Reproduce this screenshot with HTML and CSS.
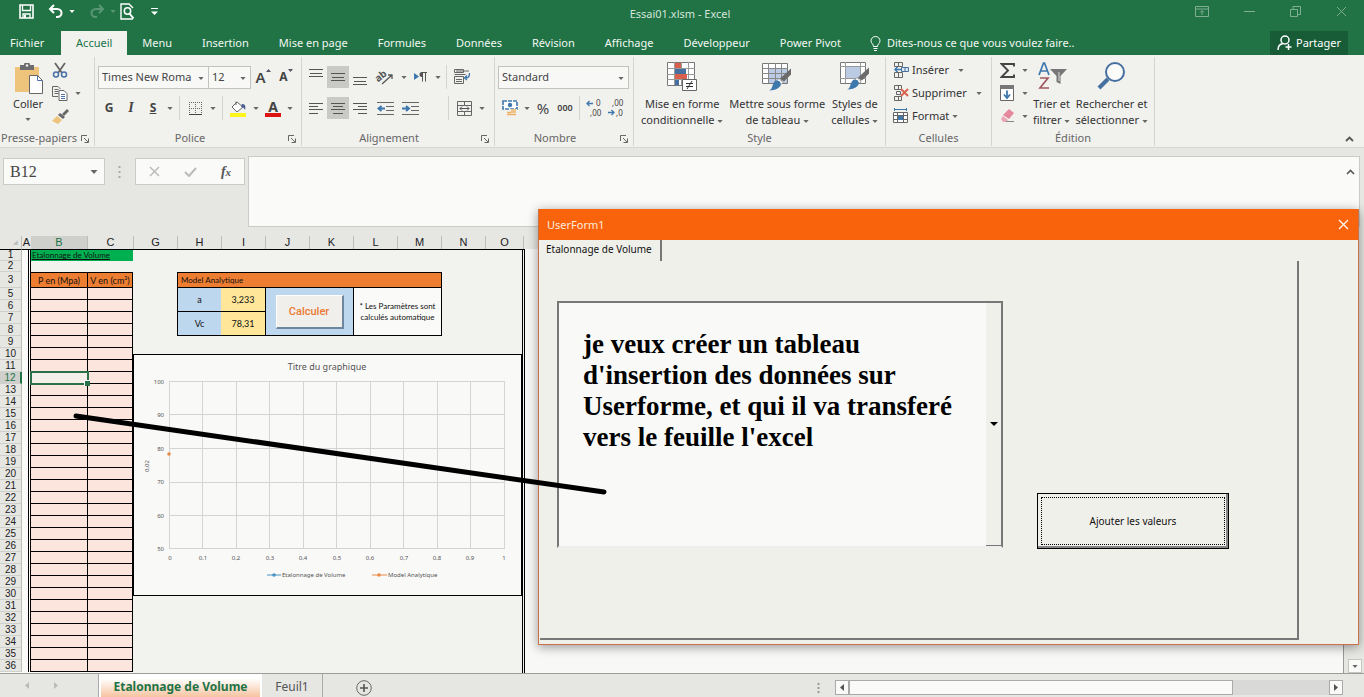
FILE: index.html
```html
<!DOCTYPE html>
<html lang="fr">
<head>
<meta charset="utf-8">
<title>Essai01.xlsm - Excel</title>
<link rel="stylesheet" href="styles.css">
</head>
<body>
<svg class="defs" aria-hidden="true">
  <symbol id="caret" viewBox="0 0 7 4"><path d="M0 0h7L3.500 4z" fill="currentColor"/></symbol>
  <symbol id="launch" viewBox="0 0 8 8"><path d="M.5 6V.5H6M3 3l4 4M7.500 3.500v4h-4" fill="none" stroke="#666"/></symbol>
  <symbol id="brush" viewBox="0 0 22 22"><path d="M22 0v6l-7 7-4-3z" fill="#6b6b6b"/><path d="M10 10l4 4-2 2-4-4z" fill="#fff" stroke="#777" stroke-width=".6"/><path d="M8 12c3 0 5 3 3 6-3 3-7 4-11 4 3-1 3-4 4-6 1-3 2-4 4-4z" fill="#3f78ad"/></symbol>
</svg>

<header class="top">
  <div class="titlebar">
    <div class="quick">
      <button class="tb" aria-label="Enregistrer"><svg width="15" height="15" viewBox="0 0 15 15"><path d="M1 1h13v13H1z" fill="none" stroke="#fff" stroke-width="1.600"/><path d="M3.500 1v5.500h8V1M4 14v-4h7v4" fill="none" stroke="#fff" stroke-width="1.300"/><path d="M5 11h2v3H5z" fill="#fff"/></svg></button>
      <button class="tb" aria-label="Annuler"><svg width="16" height="15" viewBox="0 0 16 15"><path d="M6 1L2 5l4 4M2 5h7c6 0 6 8 0 8H8" fill="none" stroke="#fff" stroke-width="2"/></svg><svg class="caret" ><use href="#caret"/></svg></button>
      <button class="tb faded" aria-label="Rétablir"><svg width="16" height="15" viewBox="0 0 16 15"><path d="M10 1l4 4-4 4M14 5H7c-6 0-6 8 0 8h1" fill="none" stroke="#fff" stroke-width="2"/></svg><svg class="caret"><use href="#caret"/></svg></button>
      <button class="tb preview" aria-label="Aperçu"><svg width="15" height="17" viewBox="0 0 15 17"><path d="M13 16H1V1h8l4 4" fill="none" stroke="#fff" stroke-width="1.400"/><circle cx="7.500" cy="8" r="3.200" fill="none" stroke="#fff" stroke-width="1.500"/><path d="M9.500 10.500l4 5" stroke="#fff" stroke-width="2"/></svg></button>
      <button class="tb" aria-label="Personnaliser"><svg width="7" height="8" viewBox="0 0 7 8"><path d="M0 .5h7" stroke="#fff"/><path d="M0 3.500h7L3.500 7z" fill="#fff"/></svg></button>
    </div>
    <div class="doc">Essai01.xlsm - Excel</div>
    <div class="wins">
      <button class="wb" aria-label="Options du ruban"><svg width="14" height="11"><path d="M.5.5h13v10H.5zM.5 3h13M7 9V5M5 6.500L7 4.500l2 2" fill="none" stroke="currentColor"/></svg></button>
      <button class="wb" aria-label="Réduire"><svg width="11" height="11"><path d="M0 5.500h11" stroke="currentColor"/></svg></button>
      <button class="wb" aria-label="Restaurer"><svg width="11" height="11"><path d="M.5 3.500h7v7h-7zM3 3V.5h7.500v8H8" fill="none" stroke="currentColor"/></svg></button>
      <button class="wb" aria-label="Fermer"><svg width="11" height="11"><path d="M1 1l9 9M10 1l-9 9" stroke="currentColor"/></svg></button>
    </div>
  </div>
  <nav class="tabs">
    <button class="tab file">Fichier</button><button class="tab on">Accueil</button><button class="tab">Menu</button><button class="tab">Insertion</button><button class="tab">Mise en page</button><button class="tab">Formules</button><button class="tab">Données</button><button class="tab">Révision</button><button class="tab">Affichage</button><button class="tab">Développeur</button><button class="tab">Power Pivot</button>
    <button class="tab tell"><svg width="11" height="15" viewBox="0 0 11 15"><path d="M3.500 10.500C3.500 8 1 7.500 1 4.800a4.500 4.300 0 0 1 9 0C10 7.500 7.500 8 7.500 10.500zM3.500 12.500h4M4 14.500h3" fill="none" stroke="#fff"/></svg>Dites-nous ce que vous voulez faire..</button>
    <button class="share"><svg width="15" height="16" viewBox="0 0 15 16"><circle cx="8" cy="5" r="4" fill="none" stroke="#fff" stroke-width="1.500"/><path d="M1 15c0-4 2-6 5-6.500M11.500 9v6M8.500 12h6" fill="none" stroke="#fff" stroke-width="1.500"/></svg>Partager</button>
  </nav>
</header>

<section class="ribbon">
  <div class="group g-clip">
    <div class="body">
      <button class="big paste"><svg width="29" height="31" viewBox="0 0 29 31"><path d="M1 4h24v25H1z" fill="#eec37c"/><path d="M6 2h4a3 3 0 0 1 6 0h4v5H6z" fill="#6d6d70"/><circle cx="13" cy="2.500" r="1.200" fill="#f1f1ee"/><path d="M15.500 12.500h8l5 5v13h-13z" fill="#fff" stroke="#666"/><path d="M23.500 12.500v5h5" fill="none" stroke="#4a72a8"/></svg><span>Coller</span><svg class="caret"><use href="#caret"/></svg></button>
      <div class="stack">
        <button class="ib" aria-label="Couper"><svg width="16" height="16" viewBox="0 0 16 16"><path d="M3 1l7 10M13 1L6 11" stroke="#666" stroke-width="1.800"/><circle cx="4" cy="12.500" r="2.500" fill="none" stroke="#4a72a8" stroke-width="1.500"/><circle cx="12" cy="12.500" r="2.500" fill="none" stroke="#4a72a8" stroke-width="1.500"/></svg></button>
        <button class="ib" aria-label="Copier"><svg width="16" height="15" viewBox="0 0 16 15"><path d="M6 10.500H.5V.5H6l2.500 2.500M2.500 3.500h4M2.500 5.500h4M2.500 7.500h4" fill="none" stroke="#666"/><path d="M7 4.500h5l3 3v7H7z" fill="#fff" stroke="#666"/><path d="M9 8.500h4M9 10.500h4M9 12.500h4" stroke="#4a72a8"/></svg><svg class="caret"><use href="#caret"/></svg></button>
        <button class="ib" aria-label="Reproduire la mise en forme"><svg width="17" height="15" viewBox="0 0 17 15"><path d="M15 0l2 2-5 5-2-2z" fill="#666"/><path d="M8 4l5 4-2 2-5-4z" fill="#666"/><path d="M5 7l5 4-4 4-6-3z" fill="#eec37c"/></svg></button>
      </div>
    </div>
    <div class="name">Presse-papiers<svg class="launch"><use href="#launch"/></svg></div>
  </div>

  <div class="group g-font">
    <div class="body rows">
      <div class="row">
        <label class="combo face"><select aria-label="Police"><option>Times New Roma</option></select><svg class="caret"><use href="#caret"/></svg></label><label class="combo size"><select aria-label="Taille"><option>12</option></select><svg class="caret"><use href="#caret"/></svg></label>
        <button class="c24 grow" aria-label="Agrandir"><b class="t15">A</b><svg width="5" height="3" viewBox="0 0 5 3"><path d="M0 3h5L2.500 0z" fill="#556"/></svg></button>
        <button class="c22 grow" aria-label="Réduire la police"><b class="t12">A</b><svg width="5" height="3" viewBox="0 0 5 3"><path d="M0 0h5L2.500 3z" fill="#556"/></svg></button>
      </div>
      <div class="row">
        <button class="c22 t12"><b>G</b></button><button class="c22"><b><i class="ser">I</i></b></button><button class="c22 t12"><b><u>S</u></b></button><button class="c12" aria-label="Souligné"><svg class="caret"><use href="#caret"/></svg></button><span class="sep"></span>
        <button class="c24" aria-label="Bordures"><svg width="13" height="13"><path d="M.5 0v13M12.500 0v13M0 .5h13M6.500 0v13M0 6.500h13" stroke="#666" stroke-dasharray="1 1"/><path d="M0 12.500h13" stroke="#444"/></svg></button><button class="c12" aria-label="Choix de bordure"><svg class="caret"><use href="#caret"/></svg></button><span class="sep"></span>
        <button class="c24" aria-label="Remplissage"><svg width="17" height="17" viewBox="0 0 17 17"><path d="M7 2l6 5-6 5-5-5zM6 5V1.500" fill="#fff" stroke="#666"/><path d="M12 4c3 0 4 2 3 6-1-2-2-3-4-3z" fill="#4a5f95"/><path d="M0 13h16v4H0z" fill="#fdf51b"/></svg></button><button class="c12" aria-label="Couleur de remplissage"><svg class="caret"><use href="#caret"/></svg></button>
        <button class="c22 fc" aria-label="Couleur de police"><b class="t14">A</b></button><button class="c12" aria-label="Choix de couleur"><svg class="caret"><use href="#caret"/></svg></button>
      </div>
    </div>
    <div class="name">Police<svg class="launch"><use href="#launch"/></svg></div>
  </div>

  <div class="group g-align">
    <div class="body rows">
      <div class="row">
        <button class="c22 up" aria-label="Haut"><svg width="14" height="10"><path d="M0 1.500h14M1 5.500h12M0 8.500h14" stroke="#555"/></svg></button><button class="c22 hi" aria-label="Milieu"><svg width="14" height="10"><path d="M0 1.500h14M1 5.500h12M0 8.500h14" stroke="#555"/></svg></button><button class="c22 down" aria-label="Bas"><svg width="14" height="10"><path d="M0 1.500h14M1 5.500h12M0 8.500h14" stroke="#555"/></svg></button>
        <button class="c28" aria-label="Orientation"><svg class="open" width="18" height="16" viewBox="0 0 18 16"><text x="0" y="10" font-size="10" font-weight="bold" fill="#555" transform="rotate(-38 6 9)">ab</text><path d="M6 15L16 6M12 6h4v4" fill="none" stroke="#555" stroke-width="1.300"/></svg></button><button class="cc" aria-label="Choix d'orientation"><svg class="caret"><use href="#caret"/></svg></button>
        <button class="c24" aria-label="Sens du texte"><svg width="14" height="12" viewBox="0 0 14 12"><path d="M0 2l5 3.500L0 9z" fill="#3f78ad"/><path d="M8.500 1.500v9M11.500 1.500v9M7 1.500h6" stroke="#555"/><path d="M9 1H8a2.500 2.500 0 0 0 0 5h1z" fill="#555"/></svg></button><button class="cc" aria-label="Choix du sens"><svg class="caret"><use href="#caret"/></svg></button><span class="sep"></span>
        <button class="c24" aria-label="Renvoyer à la ligne"><svg width="17" height="16" viewBox="0 0 17 16"><path d="M.5.5h9v3h-9zM.5 5.500h11M.5 7.500v7h9v-7zM2 10.500h6M2 12.500h6M2 2h13" fill="none" stroke="#666"/><path d="M15.500 4c0 4-1 5-5 5M13 6.500L10.500 9l2.500 2" fill="none" stroke="#3f78ad" stroke-width="1.300"/></svg></button>
      </div>
      <div class="row">
        <button class="c22" aria-label="Gauche"><svg width="14" height="13"><path d="M0 1.500h14M0 4.500h9M0 7.500h14M0 11.500h9" stroke="#555"/></svg></button><button class="c22 hi" aria-label="Centrer"><svg width="14" height="13"><path d="M0 1.500h14M2 4.500h10M0 7.500h14M2 11.500h10" stroke="#555"/></svg></button><button class="c22" aria-label="Droite"><svg width="14" height="13"><path d="M0 1.500h14M5 4.500h9M0 7.500h14M5 11.500h9" stroke="#555"/></svg></button>
        <button class="c28" aria-label="Diminuer le retrait"><svg width="17" height="13"><path d="M0 .5h17M9 4.500h8M9 8.500h8M0 12.500h17" stroke="#666"/><path d="M8 6.500H2M4.500 4L1.500 6.500l3 2.500" fill="none" stroke="#3f78ad" stroke-width="2"/></svg></button><button class="c22" aria-label="Augmenter le retrait"><svg width="17" height="13"><path d="M0 .5h17M9 4.500h8M9 8.500h8M0 12.500h17" stroke="#666"/><path d="M0 6.500h6M4 4l3 2.500L4 9" fill="none" stroke="#3f78ad" stroke-width="2"/></svg></button><span class="gap"></span><span class="sep"></span>
        <button class="c24" aria-label="Fusionner"><svg width="15" height="15"><path d="M.5.5h14v14H.5zM.5 4.500h14M.5 10.500h14M7.500 0v4M7.500 11v4" fill="none" stroke="#666"/><path d="M3 7.500h9M5 5.500l-2 2 2 2M10 5.500l2 2-2 2" fill="none" stroke="#555"/></svg></button><button class="c12" aria-label="Choix de fusion"><svg class="caret"><use href="#caret"/></svg></button>
      </div>
    </div>
    <div class="name">Alignement<svg class="launch"><use href="#launch"/></svg></div>
  </div>

  <div class="group g-num">
    <div class="body rows">
      <div class="row"><label class="combo fmt"><select aria-label="Format de nombre"><option>Standard</option></select><svg class="caret"><use href="#caret"/></svg></label></div>
      <div class="row">
        <button class="c24" aria-label="Comptabilité"><svg width="17" height="16" viewBox="0 0 17 16"><path d="M1 1h14v8H1z" fill="#fff" stroke="#3f78ad" stroke-width="1.600" stroke-dasharray="4 1"/><circle cx="8" cy="5" r="2.200" fill="#3f78ad"/><path d="M8 9h7v6H5v-4h3z" fill="#f1f1ee"/><path d="M9 10h5M9 12h5M5 12.500h4M5 14.500h9" stroke="#eeb266" stroke-width="1.500"/></svg></button><button class="cc" aria-label="Choix de devise"><svg class="caret"><use href="#caret"/></svg></button>
        <button class="c22 pct">%</button><button class="c22 mil">000</button><span class="sep"></span>
        <button class="c22" aria-label="Ajouter une décimale"><svg class="open" width="16" height="18" viewBox="0 0 16 18"><path d="M7 4.500H1M3.500 2L1 4.500 3.500 7" fill="none" stroke="#3f78ad" stroke-width="1.300"/><text x="10" y="7" font-size="8" fill="#444">0</text><text x="4" y="17" font-size="8" fill="#444">,00</text></svg></button><button class="c22" aria-label="Réduire les décimales"><svg class="open" width="16" height="18" viewBox="0 0 16 18"><text x="4" y="7" font-size="8" fill="#444">,00</text><path d="M0 13.500h6M3.500 11L6 13.500 3.500 16" fill="none" stroke="#3f78ad" stroke-width="1.300"/><text x="8" y="17" font-size="8" fill="#444">,0</text></svg></button>
      </div>
    </div>
    <div class="name">Nombre<svg class="launch"><use href="#launch"/></svg></div>
  </div>

  <div class="group g-style">
    <div class="body bigs">
      <button class="big"><svg width="30" height="31" viewBox="0 0 30 31"><path d="M.5 1.500h27v23H.5z" fill="#fff" stroke="#777"/><path d="M7.500 1v23M14.500 1v23M21.500 1v23M0 7.500h28M0 13.500h28M0 18.500h28" stroke="#999"/><path d="M8 2h6v5H8zM8 13h12v5H8z" fill="#d9604c"/><path d="M8 8h11v5H8zM8 19h4v5H8z" fill="#46709f"/><path d="M15.500 18.500h14v11h-14z" fill="#fff" stroke="#666"/><path d="M19 22.500h7M19 25.500h7M25 20l-5 8" stroke="#333"/></svg><span>Mise en forme<br>conditionnelle <svg class="caret"><use href="#caret"/></svg></span></button>
      <button class="big"><svg width="30" height="31" viewBox="0 0 30 31"><path d="M.5 2.500h25v20H.5z" fill="#fff" stroke="#777"/><path d="M7 8h18v14H7z" fill="#bccbe4"/><path d="M6.500 2v20M13.500 2v20M19.500 2v20M0 7.500h26M0 12.500h26M0 17.500h26" stroke="#888"/><use href="#brush" x="7" y="7" width="22" height="23"/></svg><span>Mettre sous forme<br>de tableau <svg class="caret"><use href="#caret"/></svg></span></button>
      <button class="big"><svg width="30" height="31" viewBox="0 0 30 31"><path d="M.5 1.500h25v21H.5z" fill="#fff" stroke="#777"/><path d="M5.500 1v21M20.500 1v21M0 5.500h26M0 17.500h26" stroke="#999"/><path d="M6 6h14v11H6z" fill="#bccbe4"/><use href="#brush" x="7" y="6" width="22" height="23"/></svg><span>Styles de<br>cellules <svg class="caret"><use href="#caret"/></svg></span></button>
    </div>
    <div class="name">Style</div>
  </div>

  <div class="group g-cells">
    <div class="body lines">
      <button class="line"><svg width="16" height="16" viewBox="0 0 16 16"><path d="M1.500.5h8v4h-8zM5.500 0v4M1.500 10.500h8v5h-8zM5.500 10v5" fill="none" stroke="#666"/><path d="M8.500 5.500h7v4h-7zM12 5v4" fill="#dce6f2" stroke="#46709f"/><path d="M8 7.500H2M4.500 5L2 7.500 4.500 10" fill="none" stroke="#3f78ad" stroke-width="1.500"/></svg>Insérer <svg class="caret far"><use href="#caret"/></svg></button>
      <button class="line"><svg width="16" height="16" viewBox="0 0 16 16"><path d="M1.500.5h7v4h-7zM5.500 0v4M3.500 6.500h4v3h-4zM1.500 11.500h7v4h-7zM5.500 11v4" fill="none" stroke="#666"/><path d="M8 4l7 7M15 4l-7 7" stroke="#d9604c" stroke-width="1.800"/></svg>Supprimer <svg class="caret far"><use href="#caret"/></svg></button>
      <button class="line"><svg width="16" height="16" viewBox="0 0 16 16"><path d="M1 1.500h13M1.500 0v3M13.500 0v3" stroke="#3f78ad"/><path d="M.5 4.500h14v10H.5zM.5 7.500h14M.5 11.500h14M4.500 4v11M10.500 4v11" fill="#fff" stroke="#666"/><path d="M5 8h5v4H5z" fill="#3f78ad"/></svg>Format <svg class="caret"><use href="#caret"/></svg></button>
    </div>
    <div class="name">Cellules</div>
  </div>

  <div class="group g-edit">
    <div class="body">
      <div class="stack wide">
        <button class="ib" aria-label="Somme"><svg width="15" height="15" viewBox="0 0 15 15"><path d="M14 3.500V1H1.500L8 7.500 1.500 14H14v-2.500" fill="none" stroke="#444" stroke-width="1.900"/></svg><svg class="caret"><use href="#caret"/></svg></button>
        <button class="ib" aria-label="Remplir"><svg width="15" height="16" viewBox="0 0 15 16"><path d="M.5.5h13v15H.5z" fill="#fff" stroke="#666"/><path d="M0 0h14v4H0z" fill="#777"/><path d="M7 5.500v7M4 9.500l3 3.500 3-3.500" fill="none" stroke="#3f78ad" stroke-width="1.800"/></svg><svg class="caret"><use href="#caret"/></svg></button>
        <button class="ib" aria-label="Effacer"><svg width="15" height="14" viewBox="0 0 15 14"><path d="M9 0l5 4-5 6-6-4z" fill="#e5879d"/><path d="M3 7l5 4-2 2H3L1 10z" fill="#e9a6b5"/><path d="M6 12.500h8" stroke="#888"/></svg><svg class="caret"><use href="#caret"/></svg></button>
      </div>
      <div class="bigs">
        <button class="big"><svg width="30" height="31" viewBox="0 0 30 31"><path d="M2 14L6.500 2h1L12 14M4 10h6" fill="none" stroke="#3f78ad" stroke-width="1.700"/><path d="M3 17h8L3 27h9" fill="none" stroke="#a15a62" stroke-width="1.700"/><path d="M13 8h17l-6.500 7v8l-4-2v-6z" fill="#777"/><path d="M22 11v9" stroke="#ddd"/></svg><span>Trier et<br>filtrer <svg class="caret"><use href="#caret"/></svg></span></button>
        <button class="big"><svg width="30" height="31" viewBox="0 0 30 31"><circle cx="18" cy="11" r="9" fill="#fbfbf9" stroke="#46709f" stroke-width="2"/><path d="M11 18L2 27" stroke="#46709f" stroke-width="4"/></svg><span>Rechercher et<br>sélectionner <svg class="caret"><use href="#caret"/></svg></span></button>
      </div>
    </div>
    <div class="name">Édition</div>
  </div>
  <button class="fold" aria-label="Réduire le ruban"><svg width="9" height="6"><path d="M1 5l3.500-3.500L8 5" fill="none" stroke="#555" stroke-width="1.800"/></svg></button>
</section>

<section class="fbar">
  <label class="namebox"><input value="B12" aria-label="Zone Nom"><svg class="caret"><use href="#caret"/></svg></label>
  <svg class="dots" width="3" height="12"><path d="M1.500 0v2M1.500 5v2M1.500 10v2" stroke="#aaa" stroke-width="2"/></svg>
  <div class="fbtns"><button aria-label="Annuler la saisie"><svg width="11" height="11"><path d="M1 1l9 9M10 1l-9 9" stroke="#bbb" stroke-width="1.500"/></svg></button><button aria-label="Entrer"><svg width="13" height="10"><path d="M1 5l4 4 7-8" fill="none" stroke="#bbb" stroke-width="2"/></svg></button><button class="fx"><i>f</i><small>x</small></button></div>
  <textarea class="formula" aria-label="Barre de formule"></textarea>
  <button class="fdown" aria-label="Réduire la barre"><svg width="9" height="6"><path d="M1 5l3.500-3.500L8 5" fill="none" stroke="#555" stroke-width="1.600"/></svg></button>
</section>

<main class="work">
  <div class="cols"><span class="k0">◢</span><span class="k1">A</span><span class="k2 sel">B</span><span class="k3">C</span><span>G</span><span>H</span><span>I</span><span>J</span><span>K</span><span>L</span><span>M</span><span>N</span><span class="k4">O</span></div>
  <div class="sheet">
    <table class="data">
      <colgroup><col class="c-num"><col class="c-a"><col class="c-b"><col class="c-c"></colgroup>
      <tr class="r1"><th>1</th><td class="a"></td><td class="ttl" colspan="2">Etalonnage de Volume</td></tr>
      <tr class="r2"><th>2</th><td class="a"></td><td colspan="2"></td></tr>
      <tr class="r3"><th>3</th><td class="a"></td><td class="h">P en (Mpa)</td><td class="h">V en (cm³)</td></tr>
      <tr><th>5</th><td class="a"></td><td class="p"></td><td class="p"></td></tr>
      <tr><th>6</th><td class="a"></td><td class="p"></td><td class="p"></td></tr>
      <tr><th>7</th><td class="a"></td><td class="p"></td><td class="p"></td></tr>
      <tr><th>8</th><td class="a"></td><td class="p"></td><td class="p"></td></tr>
      <tr><th>9</th><td class="a"></td><td class="p"></td><td class="p"></td></tr>
      <tr><th>10</th><td class="a"></td><td class="p"></td><td class="p"></td></tr>
      <tr><th>11</th><td class="a"></td><td class="p"></td><td class="p"></td></tr>
      <tr><th class="sel">12</th><td class="a"></td><td class="p cur"></td><td class="p"></td></tr>
      <tr><th>13</th><td class="a"></td><td class="p"></td><td class="p"></td></tr>
      <tr><th>14</th><td class="a"></td><td class="p"></td><td class="p"></td></tr>
      <tr><th>15</th><td class="a"></td><td class="p"></td><td class="p"></td></tr>
      <tr><th>16</th><td class="a"></td><td class="p"></td><td class="p"></td></tr>
      <tr><th>17</th><td class="a"></td><td class="p"></td><td class="p"></td></tr>
      <tr><th>18</th><td class="a"></td><td class="p"></td><td class="p"></td></tr>
      <tr><th>19</th><td class="a"></td><td class="p"></td><td class="p"></td></tr>
      <tr><th>20</th><td class="a"></td><td class="p"></td><td class="p"></td></tr>
      <tr><th>21</th><td class="a"></td><td class="p"></td><td class="p"></td></tr>
      <tr><th>22</th><td class="a"></td><td class="p"></td><td class="p"></td></tr>
      <tr><th>23</th><td class="a"></td><td class="p"></td><td class="p"></td></tr>
      <tr><th>24</th><td class="a"></td><td class="p"></td><td class="p"></td></tr>
      <tr><th>25</th><td class="a"></td><td class="p"></td><td class="p"></td></tr>
      <tr><th>26</th><td class="a"></td><td class="p"></td><td class="p"></td></tr>
      <tr><th>27</th><td class="a"></td><td class="p"></td><td class="p"></td></tr>
      <tr><th>28</th><td class="a"></td><td class="p"></td><td class="p"></td></tr>
      <tr><th>29</th><td class="a"></td><td class="p"></td><td class="p"></td></tr>
      <tr><th>30</th><td class="a"></td><td class="p"></td><td class="p"></td></tr>
      <tr><th>31</th><td class="a"></td><td class="p"></td><td class="p"></td></tr>
      <tr><th>32</th><td class="a"></td><td class="p"></td><td class="p"></td></tr>
      <tr><th>33</th><td class="a"></td><td class="p"></td><td class="p"></td></tr>
      <tr><th>34</th><td class="a"></td><td class="p"></td><td class="p"></td></tr>
      <tr><th>35</th><td class="a"></td><td class="p"></td><td class="p"></td></tr>
      <tr><th>36</th><td class="a"></td><td class="p"></td><td class="p"></td></tr>
    </table>
    <div class="panel">
      <table class="model">
        <colgroup><col class="m-b"><col class="m-y"><col class="m-l"><col class="m-l"></colgroup>
        <tr><th colspan="4">Model Analytique</th></tr>
        <tr><td class="b v">a</td><td class="y v">3,233</td><td class="b l" rowspan="2"><button class="calc">Calculer</button></td><td class="w l" rowspan="2">* Les Paramètres sont calculés automatique</td></tr>
        <tr><td class="b">Vc</td><td class="y">78,31</td></tr>
      </table>
      <svg class="chart" viewBox="0 0 387 240" role="img" aria-label="Titre du graphique">
        <path d="M35.500 26.500h335M35.500 59.500h335M35.500 93.500h335M35.500 127.500h335M35.500 160.500h335M35.500 193.500h335M35.500 26v168M68.500 26v168M102.500 26v168M135.500 26v168M169.500 26v168M202.500 26v168M236.500 26v168M269.500 26v168M303.500 26v168M336.500 26v168M370.500 26v168" stroke="#d4d4d2" fill="none"/>
        <text class="ct" x="193" y="15">Titre du graphique</text>
        <g class="ax end"><text x="30" y="29">100</text><text x="30" y="62">90</text><text x="30" y="96">80</text><text x="30" y="129">70</text><text x="30" y="163">60</text><text x="30" y="196">50</text></g>
        <g class="ax mid"><text x="36" y="205">0</text><text x="69" y="205">0,1</text><text x="102" y="205">0,2</text><text x="136" y="205">0,3</text><text x="169" y="205">0,4</text><text x="203" y="205">0,5</text><text x="236" y="205">0,6</text><text x="270" y="205">0,7</text><text x="303" y="205">0,8</text><text x="336" y="205">0,9</text><text x="370" y="205">1</text><text transform="rotate(-90 15 111)" x="15" y="111">0,02</text></g>
        <path d="M133 220h14" stroke="#4a95c4"/><circle cx="140" cy="220" r="1.800" fill="#4a95c4"/><path d="M238 220h15" stroke="#e88a45"/><circle cx="245" cy="220" r="1.800" fill="#e88a45"/><circle cx="35" cy="99" r="1.800" fill="#e88a45"/>
        <g class="ax"><text x="148" y="222">Etalonnage de Volume</text><text x="254" y="222">Model Analytique</text></g>
      </svg>
    </div>
    <div class="blank"></div>
    <div class="vscroll"><button aria-label="Défiler vers le bas"><svg class="caret"><use href="#caret"/></svg></button></div>
  </div>
</main>

<footer class="foot">
  <div class="navs"><svg width="4" height="7"><path d="M4 0v7L0 3.500z" fill="#bbb"/></svg><svg width="4" height="7"><path d="M0 0v7l4-3.500z" fill="#bbb"/></svg></div>
  <button class="st on">Etalonnage de Volume</button><button class="st">Feuil1</button>
  <button class="plus" aria-label="Nouvelle feuille"><svg width="16" height="16"><circle cx="8" cy="8" r="7.300" fill="none" stroke="#666"/><path d="M8 4v8M4 8h8" stroke="#555" stroke-width="1.600"/></svg></button>
  <svg class="dots2" width="3" height="10"><path d="M1.500 0v2M1.500 4v2M1.500 8v2" stroke="#999" stroke-width="2"/></svg>
  <div class="hscroll"><button aria-label="Gauche"><svg width="4" height="7"><path d="M4 0v7L0 3.500z" fill="#555"/></svg></button><span class="thumb"></span><span class="track"></span><button aria-label="Droite"><svg width="4" height="7"><path d="M0 0v7l4-3.500z" fill="#555"/></svg></button></div>
</footer>

<section class="form" role="dialog" aria-label="UserForm1">
  <header class="ftitle">UserForm1<button aria-label="Fermer"><svg width="11" height="11"><path d="M1 1l9 9M10 1l-9 9" stroke="#fff" stroke-width="1.200"/></svg></button></header>
  <div class="page">
    <button class="ptab">Etalonnage de Volume</button>
    <div class="pbody">
      <div class="list"><p>je veux créer un tableau d'insertion des données sur Userforme, et qui il va transferé vers le feuille l'excel</p><button aria-label="Dérouler"><svg width="8" height="4"><path d="M0 0h8L4 4z" fill="#000"/></svg></button></div>
      <button class="add"><span>Ajouter les valeurs</span></button>
    </div>
  </div>
</section>
<svg class="stroke" width="540" height="86" viewBox="0 0 540 86"><path d="M5 6L533 82" stroke="#000" stroke-width="5" stroke-linecap="round"/></svg>
</body>
</html>
```
FILE: styles.css
```css
* { box-sizing: border-box; }
body { margin: 0; height: 100vh; display: flex; flex-direction: column; overflow: hidden; position: relative; background: #e6e6e3; font: 11px/16px "Noto Sans", "Open Sans", sans-serif; color: #333; }
button, select, input, textarea { font: inherit; color: inherit; border: 0; padding: 0; margin: 0; background: none; border-radius: 0; outline: 0; }
button { display: inline-flex; align-items: center; justify-content: center; flex: none; }
svg { flex: none; }
.open { overflow: visible; }
.defs { position: absolute; width: 0; height: 0; }
.caret { width: 6px; height: 3px; color: #666; }

.top { background: #217346; color: #fff; }
.titlebar { height: 31px; display: grid; grid-template-columns: 1fr auto 1fr; align-items: center; padding: 0 17px 8px 19px; }
.quick { display: flex; align-items: center; gap: 14px; }
.tb { gap: 5px; height: 20px; }
.tb .caret { color: #fff; }
.faded { opacity: .25; }
.preview { margin: 0 2px 0 -10px; }
.doc { color: #d5e5da; padding: 4px 6px 0 0; }
.wins { display: flex; justify-content: flex-end; gap: 35px; color: #7fae93; }
.tabs { display: flex; height: 24px; }
.tab { padding: 0 15px; height: 24px; color: #f2f7f3; }
.tab.file { padding: 0 17px 0 10px; }
.tab.on { background: #f1f1ee; color: #217346; width: 66px; padding: 0; }
.tab.tell { gap: 6px; padding: 0 14px; }
.share { margin-left: auto; margin-right: 16px; width: 78px; gap: 4px; background: #185c37; color: #fff; }

.ribbon { display: flex; height: 93px; flex: none; background: #f1f1ee; border-bottom: 1px solid #d6d6d3; color: #444; }
.group { display: flex; flex-direction: column; flex: none; border-right: 1px solid #d4d4d1; margin: 2px 0 1px; padding-top: 2px; }
.body { display: flex; height: 73px; }
.rows { flex-direction: column; padding: 7px 0 0 3px; gap: 9px; }
.row { display: flex; height: 22px; align-items: center; }
.name { position: relative; text-align: center; line-height: 16px; color: #666; }
.launch { position: absolute; right: 5px; top: 5px; width: 8px; height: 8px; }
.g-clip { width: 95px; }
.g-clip .name { text-align: left; padding-left: 1px; }
.g-font { width: 207px; }
.g-align .name, .g-num .name { padding-right: 18px; }
.g-font .name { padding-right: 16px; }
.g-align { width: 193px; }
.g-num { width: 139px; }
.g-style { width: 252px; }
.g-cells { width: 106px; }
.g-edit { width: 163px; }
.c22 { width: 22px; height: 22px; }
.c24 { width: 24px; height: 22px; }
.c28 { width: 28px; height: 22px; }
.c12 { width: 12px; height: 22px; }
.cc { width: 10px; height: 22px; }
.gap { width: 24px; }
.sep { width: 1px; height: 24px; background: #d4d4d1; margin: 0 3px; }
.hi { background: #c9c9c6; }
.up { padding-bottom: 8px; }
.down { padding-top: 8px; }
.grow { align-items: center; }
.grow svg { align-self: flex-start; margin-top: 3px; }
.t15 { font-size: 15px; font-weight: 600; }
.t14 { font-size: 14px; line-height: 14px; }
.t12 { font-size: 12px; }
.ser { font-family: "Liberation Serif", serif; font-size: 14px; }
.fc b { border-bottom: 4px solid #dc1414; padding: 0 3px; line-height: 13px; }
.pct { font-size: 15px; }
.mil { font-size: 9px; font-weight: 600; }
.combo { position: relative; display: flex; height: 23px; border: 1px solid #c2c2bf; background: #f8f8f6; }
.combo select { appearance: none; width: 100%; padding: 0 3px; }
.combo .caret { position: absolute; right: 4px; top: 10px; }
.face { width: 111px; }
.size { width: 42px; border-left: 0; }
.fmt { width: 131px; }
.big { flex-direction: column; justify-content: flex-start; white-space: nowrap; color: #333; }
.big > svg:first-child { margin-bottom: 4px; }
.big span .caret { vertical-align: middle; }
.bigs { gap: 6px; padding: 2px 0 0 7px; }
.g-edit .bigs { display: flex; padding-left: 4px; gap: 5px; }
.paste { width: 36px; margin: 4px 6px 0 10px; }
.paste > svg:first-child { margin-bottom: 2px; }
.paste > .caret { margin-top: 6px; }
.stack { display: flex; flex-direction: column; gap: 1px; }
.ib { height: 22px; gap: 7px; justify-content: flex-start; }
.wide { padding-left: 8px; width: 37px; }
.lines { flex-direction: column; align-items: flex-start; padding: 0 0 0 7px; gap: 1px; }
.line { height: 22px; gap: 3px; color: #333; }
.far { margin-left: 6px; }
.fold { margin: auto 10px 5px auto; }

.fbar { display: flex; height: 88px; padding: 10px 4px 0 3px; align-items: flex-start; flex: none; }
.namebox { position: relative; width: 102px; height: 27px; border: 1px solid #cacac7; background: #fafaf8; }
.namebox input { width: 80px; height: 25px; padding-left: 6px; font: 16px "Liberation Serif", serif; color: #444; }
.namebox .caret { position: absolute; right: 6px; top: 11px; width: 8px; height: 4px; }
.dots { margin: 8px 14px 0 13px; }
.fbtns { display: flex; width: 110px; height: 27px; border: 1px solid #cacac7; background: #fafaf8; }
.fbtns button { flex: 1; }
.fx { font: bold 14px "Liberation Serif", serif; color: #555; }
.fx small { font-size: 11px; font-style: italic; }
.formula { flex: 1; height: 71px; margin: -2px 0 0 3px; border: 1px solid #cacac7; border-right: 0; background: #fafaf8; resize: none; }
.fdown { width: 18px; height: 71px; margin-top: -2px; padding-top: 12px; align-items: flex-start; background: #fafaf8; border: 1px solid #cacac7; border-left: 0; }

.work { flex: 1; min-height: 0; display: flex; flex-direction: column; font-family: "Liberation Sans", sans-serif; }
.cols { display: flex; height: 13px; font-size: 11px; line-height: 13px; color: #222; background: #e6e6e3; }
.cols span { width: 44px; text-align: center; border-right: 1px solid #bdbdba; }
.cols .k0 { width: 22px; font-size: 6px; text-align: right; color: #bbb; padding-right: 3px; }
.cols .k1 { width: 9px; border: 0; }
.cols .k2 { width: 57px; }
.cols .k3 { width: 46px; }
.cols .k4 { width: 38px; }
.cols .sel, .data .sel { background: #cfcfcc; color: #217346; }
.sheet { flex: 1; min-height: 0; display: flex; overflow: hidden; background: #f8f8f7; }
.data { flex: none; align-self: flex-start; width: 133px; table-layout: fixed; border-collapse: separate; border-spacing: 0; background: #f2f2ef; font: 8px/9px "Lato", sans-serif; color: #111; }
.c-num { width: 22px; }
.c-a { width: 9px; }
.c-b { width: 57px; }
.c-c { width: 45px; }
.data td, .data th { padding: 0; height: 12px; }
.data th { font: 10px/10px "Liberation Sans", sans-serif; color: #222; background: #e6e6e3; border-right: 1px solid #bdbdba; border-bottom: 1px solid #cfcfcc; }
.data th.sel { border-right: 2px solid #217346; }
.data .a { background: #fafaf8; border-right: 3px double #000; }
.data .r1 td, .data .r1 th { border-top: 1px solid #000; }
.data .r1 .ttl { background: #00b050; text-decoration: underline; padding-left: 1px; }
.data .r2 td, .data .r2 th { height: 11px; }
.data .h { height: 16px; background: #ed7d31; text-align: center; font-size: 9px; border: solid #000; border-width: 1px 1px 1px 0; white-space: nowrap; }
.data .p { background: #fbe5dc; border-right: 1px solid #000; border-bottom: 1px solid #000; }
.data .cur { position: relative; background: #f4efe9; outline: 2px solid #2a7048; outline-offset: -1px; }
.cur::after { content: ""; position: absolute; right: -3px; bottom: -3px; width: 5px; height: 5px; background: #2a7048; border: 1px solid #fff; border-width: 1px 0 0 1px; }
.panel { flex: none; width: 392px; background: #f2f2ef; border-top: 1px solid #000; border-right: 3px double #000; padding-top: 22px; }
.model { width: 265px; margin-left: 44px; table-layout: fixed; border-collapse: separate; border-spacing: 0; border: 1px solid #000; font: 9px/11px "Lato", sans-serif; color: #111; }
.m-b { width: 43px; }
.m-y { width: 44px; }
.m-l { width: 88px; }
.model th { height: 15px; background: #ed7d31; text-align: left; padding: 0 3px; font-weight: normal; font-size: 8px; border-bottom: 1px solid #000; }
.model td { height: 23px; padding: 0; text-align: center; }
.model .b { background: #bdd7ee; }
.model .y { background: #ffe699; }
.model .l { border-left: 1px solid #000; }
.model .w { background: #fafaf8; font-size: 8px; }
.model .v { border-bottom: 1px solid #000; height: 24px; }
.calc { width: 68px; height: 34px; background: #f0efec; border: 1px solid #fff; border-right: 2px solid #6f86a0; border-bottom: 2px solid #6f86a0; color: #ec7a34; font: 500 11px "Roboto", sans-serif; }
.chart { display: block; width: 389px; height: 242px; margin-top: 18px; background: #f9f9f8; border: 1px solid #000; font-family: "Noto Sans", sans-serif; }
.ct { font-size: 9px; text-anchor: middle; fill: #555; }
.ax { font-size: 6px; fill: #555; }
.end { text-anchor: end; }
.mid { text-anchor: middle; }
.blank { flex: 1; border-right: 1px solid #999; }
.vscroll { width: 20px; padding: 0 2px 0 4px; background: #e6e6e3; display: flex; flex-direction: column; justify-content: flex-end; }
.vscroll button { height: 14px; background: #fafaf8; border: 1px solid #c4c4c1; }

.foot { display: flex; height: 24px; flex: none; border-top: 1px solid #9c9c99; background: #e6e6e3; color: #555; font-size: 12px; }
.navs { display: flex; width: 99px; padding: 0 40px 0 25px; align-items: center; justify-content: space-between; border-right: 1px solid #aaa; }
.st { height: 23px; width: 61px; border-right: 1px solid #aaa; padding-top: 3px; }
.st.on { width: 163px; font-weight: bold; color: #217346; background: linear-gradient(#fff 20%, #f6c3a0); border: solid #fff; border-width: 0 2px; }
.plus { width: 82px; padding-top: 4px; }
.dots2 { margin: 9px 15px 0 auto; }
.hscroll { display: flex; width: 38%; max-width: 508px; margin: 6px 21px 2px 0; }
.hscroll button { width: 14px; border: 1px solid #aaa; background: #fafaf8; }
.thumb { flex: 4; border: 1px solid #aaa; background: #fafaf8; }
.track { flex: 1; background: #d9d9d7; }

.form { position: absolute; left: 538px; top: 209px; width: 821px; display: flex; flex-direction: column; background: #f0f0eb; border: 1px solid #c9714a; border-top: 0; box-shadow: 0 2px 10px rgba(0, 0, 0, .4); font-size: 10px; }
.ftitle { display: flex; height: 31px; align-items: center; justify-content: space-between; padding: 0 9px 0 8px; background: #f8630c; color: #fdebdc; font-size: 11px; }
.page { margin: 0 59px 4px 1px; }
.ptab { height: 21px; padding: 0 8px 3px 6px; color: #111; border-right: 2px solid #777; }
.pbody { display: flex; height: 379px; border-right: 2px solid #777; border-bottom: 2px solid #777; padding: 40px 0 0 17px; gap: 34px; }
.list { display: flex; width: 446px; height: 247px; border: 2px solid #777; border-bottom-color: #eee; background: #f9f9f8; }
.list p { flex: 1; margin: 0; padding: 26px 20px 0 24px; font: bold 27px/31px "Liberation Serif", serif; color: #000; }
.list button { width: 15px; background: #f0f0eb; border-bottom: 1px solid #777; }
.add { align-self: flex-start; width: 192px; height: 56px; margin-top: 192px; padding: 3px; border: 1px solid #000; box-shadow: inset -2px -2px #888; color: #111; }
.add span { flex: 1; align-self: stretch; display: flex; align-items: center; justify-content: center; border: 1px dotted #000; }
.stroke { position: absolute; left: 71px; top: 410px; pointer-events: none; }
```
